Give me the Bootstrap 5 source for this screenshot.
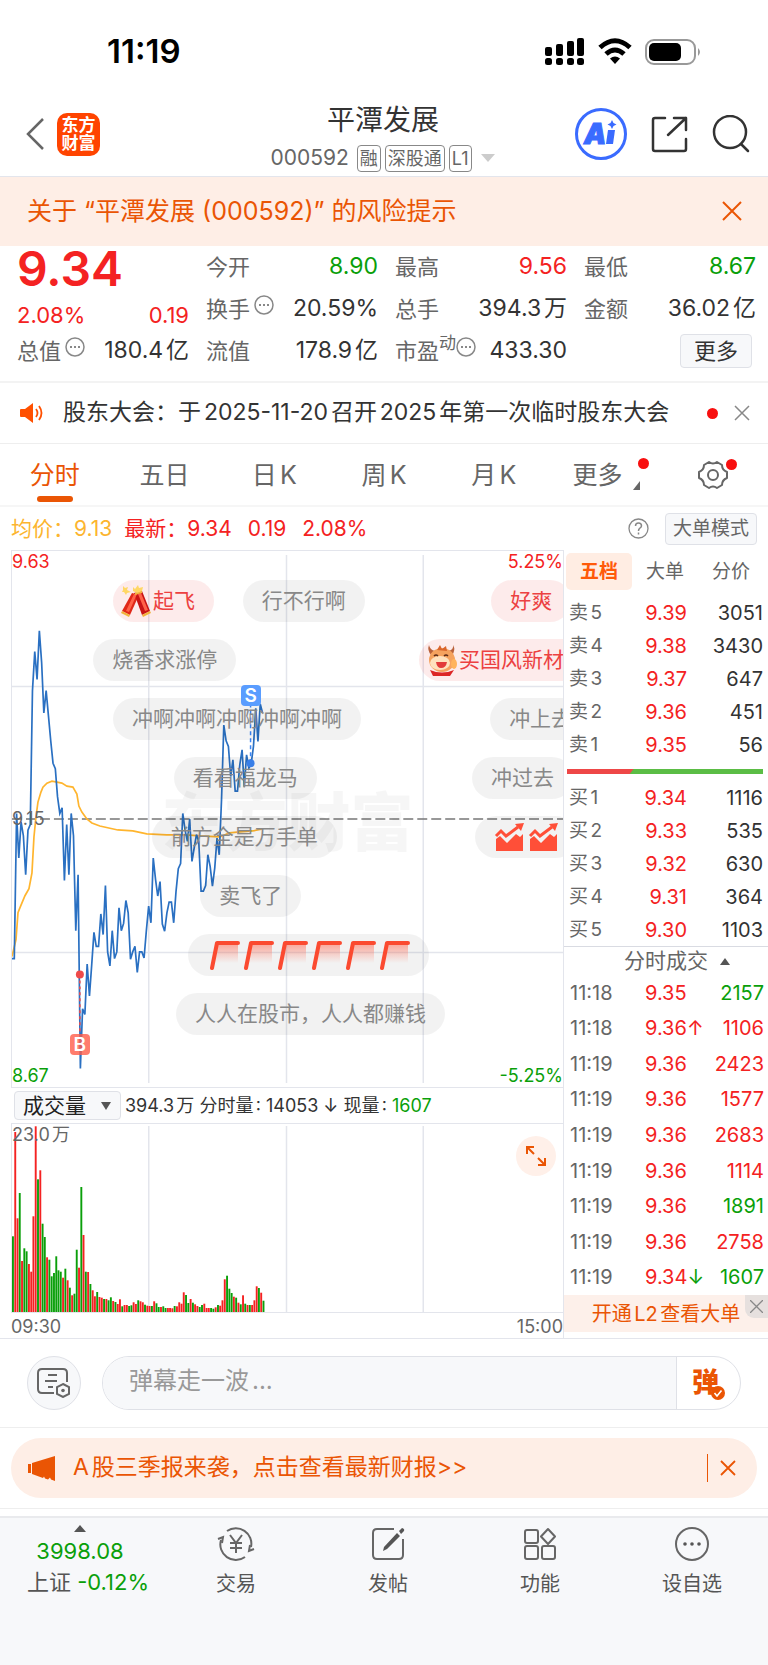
<!DOCTYPE html>
<html lang="zh-CN">
<head>
<meta charset="utf-8">
<meta name="viewport" content="width=device-width, initial-scale=1">
<title>平潭发展 000592</title>
<link href="https://cdn.jsdelivr.net/npm/bootstrap@5.3.0/dist/css/bootstrap.min.css" rel="stylesheet">
<style>
:root{--ink:#333;--grey:#666;--up:#f42222;--down:#0a9f0a;--brand:#ea5504;--tint:#feeee6;--line:#e3e5ec;--soft:#f7f8fa}
body{font-family:Inter,"Noto Sans CJK SC",sans-serif;color:var(--ink);background:#fff;line-height:1.2;text-autospace:normal}
button{border:0;background:none;padding:0;color:inherit;line-height:1}
svg{display:block;flex:none}
a{color:inherit;text-decoration:none}
.up{color:var(--up)}.down{color:var(--down)}.brand{color:var(--brand)}.grey{color:var(--grey)}
.rule{border-bottom:1px solid #eee}
.status{height:100px;padding:3px 66px 0 107px;color:#000}
.clock{font-size:33px;font-weight:600}
.top-bar{height:77px;border-bottom:1px solid var(--line);padding:0 18px 0 26px}
.logo{width:43px;height:43px;border-radius:10px;background:#ff4400;color:#fff;font-size:17px;line-height:18px;font-weight:700;padding-top:3px;margin-left:13px}
.title{font-size:28px;line-height:32px;color:var(--ink)}
.code{font-size:21px;line-height:28px;color:var(--grey)}
.tag{border:1px solid #888;border-radius:4px;font-size:18px;line-height:25px;padding:0 2px}
.side{width:180px;margin-bottom:8px}
.side-end{width:190px}
.risk{height:69px;background:var(--tint);padding:0 26px 2px 27px;font-size:25px}
.quote{display:grid;grid-template-columns:repeat(4,1fr);column-gap:17px;padding:0 12px 9px 17px;font-size:23px;border-bottom:2px solid #f3f3f3}
.quote .grey,.more-btn,.change{font-size:22px}
.quote .sup{font-size:17px}
.cell{height:42px}
.price{font-size:48px;font-weight:600;line-height:46px}
.change{margin-top:8px;height:30px}
.more-btn,.mode-btn,.pick{background:var(--soft);border:1px solid #dfe1e7;border-radius:4px}
.more-btn{width:72px;height:34px;margin-right:4px}
.info{margin:-8px 0 0 4px}
.notice{height:61px;padding:0 18px 0 20px;font-size:23px}
.notice a{margin-left:19px}
.dot{width:11px;height:11px;border-radius:50%;background:#f80f0f}
.tabs{height:63px;font-size:25px;border-bottom:2px solid #f6f6f6}
.tabs a{flex:1;display:flex;justify-content:center}
.tabs .on{color:var(--brand)}
.tabs .on span::after{content:"";position:absolute;left:7px;right:7px;bottom:-12px;height:6px;border-radius:3px;background:var(--brand)}
.tabs .dot{position:absolute;top:-2px;right:-9px}
.tabs .gear .dot{top:-1px}
.tabs .more{padding-right:18px;left:3px}
.summary{height:43px;padding:0 11px;font-size:21px}
.avg{color:#fcb52f}
.mode-btn{font-size:19px;height:32px;padding:0 7px}
.board{padding-left:11px;border-bottom:1px solid var(--line)}
.plot{position:relative;border:1px solid var(--line);border-right:0;overflow:hidden;font-size:18px}
.plot svg.area{width:100%}
.corner{position:absolute;line-height:22px}
.corner.mid{top:257px}
.watermark{position:absolute;top:45%;left:0;right:0;font-size:63px;line-height:60px;font-weight:900;color:rgba(0,0,0,.035);text-align:center}
.lanes{position:absolute;inset:29px 0 0 -1px;display:flex;flex-direction:column;gap:17px}
.lane{position:relative;height:42px}
.say{position:absolute;top:0;height:42px;border-radius:21px;padding:0 19px;background:rgba(0,0,0,.05);color:#888;font-size:21px;line-height:42px;white-space:nowrap;display:flex;align-items:center;gap:4px}
.say.hot{background:rgba(240,60,60,.1);color:#ec4141}
.say.pic{padding-left:8px;gap:2px}
.mark-s,.mark-b{position:absolute;width:20px;height:21px;border-radius:4px;color:#fff;font-size:19px;font-weight:600;line-height:21px;text-align:center;transform:translateX(-50%)}
.mark-s{background:#5a9dff}.mark-b{background:rgba(255,92,72,.8)}
.volhead{height:35px;padding-left:3px;font-size:18px}
.pick{-webkit-appearance:none;appearance:none;height:29px;width:107px;font-size:21px;line-height:27px;padding:0 8px;color:#222}
.picker::after{content:"";position:absolute;right:10px;top:11px;border:5px solid transparent;border-top:8px solid #555;border-bottom:0}
.expand{position:absolute;right:7px;top:12px;width:40px;height:40px;border-radius:50%;background:#fff0e9}
.axis{font-size:18px;height:25px;line-height:28px}
.book{width:205px;flex:none;border-left:1px solid var(--line);font-size:20px}
.book-tabs{padding:3px 4px 6px 2px}
.book-tabs .nav-link{border-radius:5px;width:66px;height:37px;padding:0;font-size:19px;color:var(--grey)}
.book-tabs .active{background:#ffede3;color:#ff5a0a;font-weight:700}
.book table{width:100%;margin:0;line-height:1}
.book th,.book td{padding:0;font-weight:400;vertical-align:middle}
.lvl th{width:80px;padding-left:5px;color:var(--grey);font-size:19px}
.lvl td:nth-child(2){width:43px;text-align:right;color:var(--up)}
.lvl td:nth-child(3){padding-right:5px;text-align:right}
.lvl tr{height:33px}
.balance{height:5px;margin:8px 5px 7px 3px;background:#5bbd45}
.balance div{height:5px;background:#ee4747;clip-path:polygon(0 0,100% 0,calc(100% - 4px) 100%,0 100%)}
.tick-head{border-top:1px solid #d9dbe2;height:29px;font-size:21px;padding-left:22px}
.ticks{height:320px}
.ticks th{width:81px;padding-left:6px;color:var(--grey)}
.ticks td:nth-child(2){color:var(--up)}
.ticks td:nth-child(3){text-align:right;padding-right:4px}
.l2{height:37px;background:#fdf0ea;font-size:20px;position:relative}
.l2 button{position:absolute;right:0;top:0;width:23px;height:23px;background:#e6e0de;border-bottom-left-radius:9px}
.talk{height:89px;padding:0 27px;gap:21px}
.circle-btn{width:54px;height:54px;border-radius:50%;background:var(--soft);border:1px solid #dfe1e7}
.talk-box{height:54px;border:1px solid #dfe1e7;border-radius:27px;overflow:hidden;background:#fff}
.talk-box input{border:0;background:var(--soft);font-size:24px;padding:0 26px 3px;color:var(--ink);outline:0;min-width:0}
.talk-box input::placeholder{color:#999}
.talk-box button{width:64px;border-left:1px solid #dfe1e7;padding-right:6px}
.talk-box button svg{position:absolute;left:34px;top:29px}
.danmu{font-size:27px;font-weight:900;line-height:36px;color:var(--brand)}
.promo{margin:10px 11px;height:60px;border-radius:30px;background:var(--tint);font-size:23px;padding:0 21px 0 17px}
.promo a{margin-left:17px}
.promo i{width:1px;height:28px;background:var(--brand)}
.dock{background:var(--soft);border-top:2px solid #e9eaed;margin-top:7px;height:149px;color:#555}
.index{width:160px;flex:none;font-size:22px;padding-top:7px;white-space:nowrap}
.index span{line-height:31px}
.dock-item{flex:1;font-size:20px;padding-top:9px;line-height:24px}
.dock-item svg{margin-bottom:11px}
</style>
</head>
<body>
<header>
  <div class="status d-flex justify-content-between align-items-center">
    <span class="clock">11:19</span>
    <div class="d-flex align-items-center">
      <svg width="40" height="28" viewBox="0 0 40 28"><g fill="#000"><rect y="9" width="7" height="9" rx="2"/><rect x="11" y="6" width="7" height="12" rx="2"/><rect x="22" y="3" width="7" height="15" rx="2"/><rect x="32" width="7" height="18" rx="2"/><rect y="20" width="7" height="7" rx="2.500"/><rect x="11" y="20" width="7" height="7" rx="2.500"/><rect x="22" y="20" width="7" height="7" rx="2.500"/><rect x="32" y="20" width="7" height="7" rx="2.500"/></g></svg>
      <svg class="mx-2" width="44" height="28" viewBox="-4 0 42 28"><g fill="none" stroke="#000" stroke-width="5"><path d="M2 9.500Q17-4 32 9.500"/><path d="M8 16Q17 8 26 16"/></g><path d="M12 20.500q5-4 10 0l-5 5.500z"/></svg>
      <svg width="57" height="28" viewBox="0 0 57 28"><rect x="1" y="2" width="49" height="24" rx="8" fill="none" stroke="#999" stroke-width="2"/><rect x="4" y="5" width="32" height="18" rx="5"/><path d="M53 10q4 4 0 8z" fill="#999"/></svg>
    </div>
  </div>
  <div class="top-bar d-flex align-items-center justify-content-between">
    <div class="side d-flex align-items-center">
      <button aria-label="返回"><svg width="18" height="32" viewBox="0 0 18 32"><path d="M17 1L2 16l15 15" fill="none" stroke="#666" stroke-width="2.500"/></svg></button>
      <div class="logo text-center">东方<br>财富</div>
    </div>
    <div class="text-center">
      <h1 class="title mb-2 fw-normal">平潭发展</h1>
      <div class="code d-flex align-items-center">
        <span class="me-2">000592</span><span class="tag me-1">融</span><span class="tag me-1">深股通</span><span class="tag">L1</span>
        <svg class="ms-2" width="16" height="8" viewBox="0 0 16 8"><path d="M1 0h14L8 8z" fill="#ccc"/></svg>
      </div>
    </div>
    <div class="side side-end d-flex align-items-center justify-content-end">
      <button aria-label="AI"><svg width="52" height="52" viewBox="0 0 52 52"><circle cx="26" cy="26" r="24.500" fill="none" stroke="#3a6bff" stroke-width="3"/><text x="9" y="36" font-family="Inter" font-size="28" font-weight="900" font-style="italic" fill="#3a6bff" stroke="#3a6bff">A</text><path d="M33 22h7l-2 14h-7z" fill="#3a6bff"/><path d="M37 12l1.500 3 3 1.500-3 1.500-1.500 3-1.500-3-3-1.500 3-1.500z" fill="#3a6bff"/></svg></button>
      <button class="ms-4" aria-label="分享"><svg width="37" height="37" viewBox="0 0 37 37"><g fill="none" stroke="#333" stroke-width="2.500" stroke-linecap="round" stroke-linejoin="round"><path d="M14 2H4Q2 2 2 4v29q0 2 2 2h29q2 0 2-2V23"/><path d="M23 2h12v12M35 2L17 19"/></g></svg></button>
      <button class="ms-4" aria-label="搜索"><svg width="38" height="38" viewBox="0 0 38 38"><g fill="none" stroke="#333" stroke-width="2.500" stroke-linecap="round"><circle cx="18" cy="17" r="16"/><path d="M29 29l7 7"/></g></svg></button>
    </div>
  </div>
</header>

<div class="risk brand d-flex align-items-center justify-content-between">
  <a href="#">关于 “平潭发展 (000592)” 的风险提示</a>
  <button aria-label="关闭"><svg width="20" height="20" viewBox="0 0 20 20"><path d="M1 1l18 18M19 1L1 19" stroke="#ea5504" stroke-width="2"/></svg></button>
</div>

<section class="quote">
  <div>
    <div class="price up">9.34</div>
    <div class="change up d-flex align-items-center justify-content-between"><span>2.08%</span><span>0.19</span></div>
    <div class="cell d-flex align-items-center"><span class="grey">总值</span><svg class="info" width="20" height="20" viewBox="0 0 20 20"><circle cx="10" cy="10" r="9" fill="none" stroke="#888" stroke-width="1.500"/><path d="M5 9h2v2H5zm4 0h2v2H9zm4 0h2v2h-2z" fill="#888"/></svg><span class="ms-auto">180.4亿</span></div>
  </div>
  <div>
    <div class="cell d-flex align-items-center justify-content-between"><span class="grey">今开</span><span class="down">8.90</span></div>
    <div class="cell d-flex align-items-center"><span class="grey">换手</span><svg class="info" width="20" height="20" viewBox="0 0 20 20"><circle cx="10" cy="10" r="9" fill="none" stroke="#888" stroke-width="1.500"/><path d="M5 9h2v2H5zm4 0h2v2H9zm4 0h2v2h-2z" fill="#888"/></svg><span class="ms-auto">20.59%</span></div>
    <div class="cell d-flex align-items-center justify-content-between"><span class="grey">流值</span><span>178.9亿</span></div>
  </div>
  <div>
    <div class="cell d-flex align-items-center justify-content-between"><span class="grey">最高</span><span class="up">9.56</span></div>
    <div class="cell d-flex align-items-center justify-content-between"><span class="grey">总手</span><span>394.3万</span></div>
    <div class="cell d-flex align-items-center"><span class="grey">市盈</span><span class="grey sup lh-1 mb-3">动</span><svg class="info ms-0" width="20" height="20" viewBox="0 0 20 20"><circle cx="10" cy="10" r="9" fill="none" stroke="#888" stroke-width="1.500"/><path d="M5 9h2v2H5zm4 0h2v2H9zm4 0h2v2h-2z" fill="#888"/></svg><span class="ms-auto">433.30</span></div>
  </div>
  <div>
    <div class="cell d-flex align-items-center justify-content-between"><span class="grey">最低</span><span class="down">8.67</span></div>
    <div class="cell d-flex align-items-center justify-content-between"><span class="grey">金额</span><span>36.02亿</span></div>
    <div class="cell d-flex align-items-center justify-content-end"><button class="more-btn">更多</button></div>
  </div>
</section>

<div class="notice rule d-flex align-items-center">
  <svg width="24" height="20" viewBox="0 0 24 20"><path d="M1 6h4l8-6v20l-8-6H1q-1 0-1-1V7q0-1 1-1z" fill="#ff5000"/><path d="M16 6q3 4 0 8M19 3q5 7 0 14" fill="none" stroke="#ff5000" stroke-width="1.800"/></svg>
  <a href="#" class="text-nowrap">股东大会：于2025-11-20召开2025年第一次临时股东大会</a>
  <span class="dot ms-auto"></span>
  <button class="ms-3" aria-label="关闭"><svg width="16" height="16" viewBox="0 0 16 16"><path d="M1 1l14 14M15 1L1 15" stroke="#888" stroke-width="1.500"/></svg></button>
</div>

<nav class="tabs grey d-flex align-items-center">
  <a href="#" class="on"><span class="position-relative">分时</span></a><a href="#">五日</a><a href="#">日K</a><a href="#">周K</a><a href="#">月K</a>
  <a href="#"><span class="more position-relative">更多<span class="dot"></span><svg class="position-absolute bottom-0 end-0" width="7" height="9" viewBox="0 0 7 9"><path d="M7 0v9H0z" fill="#666"/></svg></span></a>
  <a href="#" aria-label="设置"><span class="gear position-relative"><svg width="30" height="30" viewBox="0 0 30 30"><g fill="none" stroke="#666" stroke-width="2" stroke-linejoin="round"><path d="M11 2q4 3 8 0l5 3q0 5 5 7v6q-5 2-5 7l-5 3q-4-3-8 0l-5-3q0-5-5-7v-6q5-2 5-7z"/><circle cx="15" cy="15" r="5"/></g></svg><span class="dot"></span></span></a>
</nav>

<div class="summary d-flex align-items-center">
  <span class="avg">均价：9.13</span><span class="up ms-2 ps-1">最新：9.34</span><span class="up ms-3">0.19</span><span class="up ms-3">2.08%</span>
  <button class="ms-auto me-3" aria-label="帮助"><svg width="21" height="21" viewBox="0 0 21 21"><circle cx="10.500" cy="10.500" r="9.500" fill="none" stroke="#888" stroke-width="1.300"/><path d="M7.500 8q0-3 3-3t3 3q0 1-2 2.500-1 1-1 2.500m0 1.500v2" fill="none" stroke="#888" stroke-width="1.500"/></svg></button>
  <button class="mode-btn grey">大单模式</button>
</div>

<main class="board d-flex">
  <section class="flex-grow-1">
    <div class="plot">
      <div class="watermark">东方财富</div>
      <svg class="area" id="priceChart" height="536" viewBox="0 0 552 538" preserveAspectRatio="none">
        <g stroke="#e3e5ec" stroke-width="1.500"><path d="M137 4v530M275 4v530M412 4v530M0 136h552M0 403h552"/></g>
        <path d="M0 269h552" stroke="#777" stroke-width="1.500" stroke-dasharray="10 4"/>
        <polyline fill="none" stroke="#ffb52e" stroke-width="1.700" points="0,407 4,390 6,363 8,358 13,346 17,339 20,323 22,287 24,267 26,252 29,242 31,237 35,233 40,231 45,232 50,233 55,236 61,237 65,244 67,256 70,262 75,269 80,273 88,276 106,280 121,281 135,284 155,285 175,285 188,286 208,287 218,283 228,282 241,281 251,279"/>
        <polyline id="priceLine" fill="none" stroke="#2a70c2" stroke-width="1.700"/>
        <circle cx="68" cy="425" r="4" fill="#ee4a4a"/><path d="M68 425v60" stroke="#ee4a4a" stroke-width="1.500" stroke-dasharray="3 3"/>
        <circle cx="239" cy="213" r="4" fill="#3d86f5"/><path d="M239 213v-65" stroke="#3d86f5" stroke-width="1.500" stroke-dasharray="4 3"/>
      </svg>
      <span class="corner up top-0 start-0">9.63</span><span class="corner up top-0 end-0">5.25%</span>
      <span class="corner mid grey start-0">9.15</span>
      <span class="corner down bottom-0 start-0">8.67</span><span class="corner down bottom-0 end-0">-5.25%</span>
      <div class="lanes">
        <div class="lane"><span class="say hot pic" style="left:18.500%"><svg width="30" height="32" viewBox="0 0 30 32"><path d="M11 8l7 2-9 20-8-4z" fill="#e02818"/><path d="M13 8l8-2 8 20-8 4z" fill="#c81414"/><path d="M13 9l3 0-8 18-3-1zM17 9l3-1 7 17-3 1z" fill="#ff6248"/><path d="M1 26l8 4-1 2-8-4zM21 30l8-4 1 2-8 4zM14 8l7-2v2l-7 2z" fill="#f1b33c"/><path d="M12 2l2 2 3-4 1 3 4-1-1 4-5 2-4-2zM2 1l2 2 3-1-1 3 4 2-4 1-1 2-2-3-2 0 1-2z" fill="#ffd765"/></svg>起飞</span><span class="say" style="left:42%">行不行啊</span><span class="say hot" style="left:87%">好爽</span></div>
        <div class="lane"><span class="say" style="left:14.900%">烧香求涨停</span><span class="say hot pic" style="left:73.900%"><svg width="30" height="32" viewBox="0 0 30 32"><path d="M2 1q1 5 6 6l-4 4Q0 6 2 1zM26 1q1 5-5 6l4 4q4-5 1-10z" fill="#b9613b"/><ellipse cx="15" cy="16" rx="13" ry="12" fill="#f5a25f"/><path d="M10 6l3-5 2 4 4-3 1 5z" fill="#d9652c"/><ellipse cx="13" cy="19" rx="10" ry="7" fill="#ffe0bd"/><path d="M7 12q2-2 4 0M17 12q2-2 4 0" stroke="#5b2a18" stroke-width="1.500" fill="none"/><path d="M9 18h11q-1 6-6 6-4 0-5-6z" fill="#e23a3a"/><path d="M3 26q12 5 24 0l-4 6H6z" fill="#dc2626"/><ellipse cx="27" cy="20" rx="3" ry="5" fill="#ffb45c"/></svg>买国风新材</span></div>
        <div class="lane"><span class="say" style="left:18.500%">冲啊冲啊冲啊冲啊冲啊</span><span class="say" style="left:86.800%">冲上去</span></div>
        <div class="lane"><span class="say" style="left:29.500%">看看福龙马</span><span class="say" style="left:83.500%">冲过去</span></div>
        <div class="lane"><span class="say" style="left:25.500%">前方全是万手单</span><span class="say" style="left:84.100%"><svg width="64" height="30" viewBox="0 0 64 30"><g id="rise"><path d="M2 29V17l4-3 7 7 9-9 4 3 3-3v17z" fill="#ff4f38"/><path d="M2 14l5-5 5 5 12-9" fill="none" stroke="#ff4f38" stroke-width="3"/><path d="M21 2l9-1-3 8z" fill="#ff4f38"/></g><use href="#rise" x="34"/></svg></span></div>
        <div class="lane"><span class="say" style="left:34.300%">卖飞了</span></div>
        <div class="lane"><span class="say" style="left:32%"><svg width="203" height="30" viewBox="0 0 203 30"><defs><linearGradient id="fade" x2="0" y2="1"><stop stop-color="#ff7a66" stop-opacity=".65"/><stop offset="1" stop-color="#ff7a66" stop-opacity="0"/></linearGradient><g id="flag"><path d="M9 3h22v20H5z" fill="url(#fade)"/><path d="M5 28L10 3H31" fill="none" stroke="#fb4a30" stroke-width="4" stroke-linecap="round" stroke-linejoin="round"/></g></defs><use href="#flag"/><use href="#flag" x="34"/><use href="#flag" x="68"/><use href="#flag" x="102"/><use href="#flag" x="136"/><use href="#flag" x="170"/></svg></span></div>
        <div class="lane"><span class="say" style="left:29.900%">人人在股市，人人都赚钱</span></div>
      </div>
      <span class="mark-s" style="left:43.300%;top:134px">S</span>
      <span class="mark-b" style="left:12.300%;top:483px">B</span>
    </div>
    <div class="volhead d-flex align-items-center">
      <label class="picker position-relative"><select class="pick" aria-label="指标"><option>成交量</option></select></label>
      <span class="ms-1">394.3万 分时量: 14053 ↓ 现量: <span class="down">1607</span></span>
    </div>
    <div class="plot">
      <svg class="area" id="volChart" height="188" viewBox="0 0 552 188" preserveAspectRatio="none"><path d="M137 2v186M275 2v186M412 2v186" stroke="#e3e5ec" stroke-width="1.500"/></svg>
      <span class="corner grey start-0 top-0">23.0万</span>
      <button class="expand d-flex align-items-center justify-content-center" aria-label="全屏"><svg width="22" height="22" viewBox="0 0 22 22"><path d="M2 9V2h7M2 2l7 7M20 13v7h-7M20 20l-7-7" fill="none" stroke="#ea5504" stroke-width="2"/></svg></button>
    </div>
    <div class="axis grey d-flex justify-content-between"><span>09:30</span><span>15:00</span></div>
  </section>

  <aside class="book">
    <div class="book-tabs nav d-flex flex-nowrap">
      <button class="nav-link active">五档</button><button class="nav-link">大单</button><button class="nav-link">分价</button>
    </div>
    <table class="lvl"><tbody>
      <tr><th>卖5</th><td>9.39</td><td>3051</td></tr>
      <tr><th>卖4</th><td>9.38</td><td>3430</td></tr>
      <tr><th>卖3</th><td>9.37</td><td>647</td></tr>
      <tr><th>卖2</th><td>9.36</td><td>451</td></tr>
      <tr><th>卖1</th><td>9.35</td><td>56</td></tr>
    </tbody></table>
    <div class="balance"><div style="width:34%"></div></div>
    <table class="lvl"><tbody>
      <tr><th>买1</th><td>9.34</td><td>1116</td></tr>
      <tr><th>买2</th><td>9.33</td><td>535</td></tr>
      <tr><th>买3</th><td>9.32</td><td>630</td></tr>
      <tr><th>买4</th><td>9.31</td><td>364</td></tr>
      <tr><th>买5</th><td>9.30</td><td>1103</td></tr>
    </tbody></table>
    <div class="tick-head grey d-flex align-items-center justify-content-center"><span>分时成交</span><svg class="ms-2 ps-1" width="14" height="7" viewBox="0 0 10 7"><path d="M5 0l5 7H0z" fill="#555"/></svg></div>
    <table class="ticks"><tbody>
      <tr><th>11:18</th><td>9.35</td><td class="down">2157</td></tr>
      <tr><th>11:18</th><td>9.36↑</td><td class="up">1106</td></tr>
      <tr><th>11:19</th><td>9.36</td><td class="up">2423</td></tr>
      <tr><th>11:19</th><td>9.36</td><td class="up">1577</td></tr>
      <tr><th>11:19</th><td>9.36</td><td class="up">2683</td></tr>
      <tr><th>11:19</th><td>9.36</td><td class="up">1114</td></tr>
      <tr><th>11:19</th><td>9.36</td><td class="down">1891</td></tr>
      <tr><th>11:19</th><td>9.36</td><td class="up">2758</td></tr>
      <tr><th>11:19</th><td>9.34<span class="down">↓</span></td><td class="down">1607</td></tr>
    </tbody></table>
    <div class="l2 brand d-flex align-items-center justify-content-center"><a href="#">开通L2查看大单</a><button class="d-flex align-items-center justify-content-center" aria-label="关闭"><svg width="13" height="13" viewBox="0 0 13 13"><path d="M0 0l13 13M13 0L0 13" stroke="#888" stroke-width="1.300"/></svg></button></div>
  </aside>
</main>

<form class="talk rule d-flex align-items-center">
  <button type="button" class="circle-btn d-flex align-items-center justify-content-center flex-shrink-0" aria-label="弹幕设置"><svg width="34" height="30" viewBox="0 0 34 30"><g fill="none" stroke="#666" stroke-width="2"><path d="M17 25H5q-4 0-4-4V5q0-4 4-4h21q4 0 4 4v9M11 7h9M8 13h12M11 19h5"/><path d="M26 16l6 3v7l-6 3-6-3v-7z"/></g><circle cx="26" cy="22.500" r="1.800" fill="#666"/></svg></button>
  <div class="talk-box d-flex flex-grow-1"><input class="flex-grow-1" type="text" placeholder="弹幕走一波..." aria-label="弹幕走一波">
    <button type="button" class="position-relative" aria-label="弹幕开关"><span class="danmu">弹</span><svg width="14" height="14" viewBox="0 0 14 14"><circle cx="7" cy="7" r="7" fill="#ea5504"/><path d="M3.500 7l2.500 3 4.500-5.500" fill="none" stroke="#fff" stroke-width="1.600"/></svg></button></div>
</form>

<div class="promo brand d-flex align-items-center">
  <svg width="28" height="25" viewBox="0 0 28 25"><path d="M0 8h3v9H0zM4 7L27 0v25l-4-1.500-1-2-2 2-3-1-1-2-1 1.500L4 18z" fill="#ea5504"/></svg>
  <a href="#">A股三季报来袭，点击查看最新财报&gt;&gt;</a>
  <i class="ms-auto me-2"></i>
  <button class="ps-1" aria-label="关闭"><svg width="16" height="16" viewBox="0 0 16 16"><path d="M1 1l14 14M15 1L1 15" stroke="#ea5504" stroke-width="1.800"/></svg></button>
</div>
<div class="rule"></div>

<footer class="dock d-flex">
  <a href="#" class="index d-flex flex-column align-items-center"><svg width="12" height="7" viewBox="0 0 12 7"><path d="M6 0l6 7H0z" fill="#555"/></svg><span class="down mt-1">3998.08</span><span class="ps-3">上证 <span class="down">-0.12%</span></span></a>
  <a href="#" class="dock-item d-flex flex-column align-items-center"><svg width="38" height="34" viewBox="0 0 38 34"><g fill="none" stroke="#666" stroke-width="2"><path d="M10 4A15.500 15.500 0 0 1 34 20M28 30A15.500 15.500 0 0 1 4 13"/><path d="M1 12l5-2-1 6M37 22l-5 2 1-6"/><path d="M13 8l6 8 6-8M19 16v10M13 16h12M13 21h12"/></g></svg>交易</a>
  <a href="#" class="dock-item d-flex flex-column align-items-center"><svg width="34" height="34" viewBox="0 0 34 34"><path d="M23 2H6Q2 2 2 6v22q0 4 4 4h22q4 0 4-4V12" fill="none" stroke="#666" stroke-width="2"/><path d="M26 6l3 3-13 13-4 2 1-4zM28 4l3-3q3 1 2 3l-3 3z" fill="#555"/></svg>发帖</a>
  <a href="#" class="dock-item d-flex flex-column align-items-center"><svg width="32" height="34" viewBox="0 0 32 34"><g fill="none" stroke="#666" stroke-width="2"><rect x="1" y="3" width="13" height="13" rx="2"/><rect x="1" y="19" width="13" height="13" rx="2"/><rect x="18" y="19" width="13" height="13" rx="2"/><path d="M24 2l7 7.500-7 7.500-7-7.500z" stroke-linejoin="round"/></g></svg>功能</a>
  <a href="#" class="dock-item d-flex flex-column align-items-center"><svg width="34" height="34" viewBox="0 0 34 34"><circle cx="17" cy="17" r="16" fill="none" stroke="#666" stroke-width="2"/><g fill="#555"><circle cx="10" cy="17" r="1.800"/><circle cx="17" cy="17" r="1.800"/><circle cx="24" cy="17" r="1.800"/></g></svg>设自选</a>
</footer>

<script src="https://cdn.jsdelivr.net/npm/bootstrap@5.3.0/dist/js/bootstrap.bundle.min.js"></script>
<script>
// Minute prices in tenths of a cent, 09:30 to 11:19, spread over the traded part of the axis
const prices = [8900,8900,9160,9080,9145,9120,9050,9130,9140,9380,9450,9400,9487,9430,9340,9380,9335,9290,9250,9240,9190,9160,9170,9040,9140,9050,9160,9120,8950,9050,8703,8810,8800,8890,8833,8890,8947,8922,8922,8980,8943,9031,8912,8887,8950,8900,8912,8991,8950,8963,9004,8982,8899,8912,8922,8875,8912,8912,8901,8950,8994,8964,9080,9042,9012,9038,8962,8949,8982,9001,9001,8964,9020,9061,9070,9160,9130,9110,9150,9074,9098,9122,9110,9021,9021,9031,9086,9065,9030,9062,9116,9086,9184,9318,9290,9280,9226,9256,9200,9200,9247,9274,9208,9265,9241,9249,9280,9348,9289,9356,9340];
const step = 251 / (prices.length - 1);
document.getElementById('priceLine').setAttribute('points',
  prices.map((p, i) => (i * step).toFixed(1) + ',' + ((9630 - p) / 960 * 538).toFixed(1)).join(' '));

// Minute volumes; r = up minute, g = down minute
const volumes = 'g227 r540 r281 g357 r153 g191 g182 r144 r121 r287 r557 g398 r425 g265 g225 r164 g157 g107 g117 g167 g125 g121 r103 g130 r95 g73 r50 g55 g187 r133 g375 r231 g121 r120 g84 r65 r47 g60 r45 r43 g39 r39 g35 g44 r33 g30 r24 r38 g17 r21 r21 g18 g20 r29 r24 g35 r32 r29 g22 r19 r18 g18 r32 g26 g15 r15 g17 g12 r12 r12 r11 g18 r17 r29 r25 r59 g51 g27 r39 g28 r23 r18 g15 g21 r25 r12 r12 g12 g10 r14 g21 r19 r35 r98 g109 g70 g57 r46 g43 r28 g23 r50 g25 r21 g21 r21 r35 r77 g72 r58 g34'.split(' ');
document.getElementById('volChart').insertAdjacentHTML('beforeend', volumes.map((v, i) => {
  const h = v.slice(1) / 3;
  return `<rect x="${(i * step).toFixed(1)}" y="${(188 - h).toFixed(1)}" width="1.900" height="${h.toFixed(1)}" fill="${v[0] === 'r' ? '#f42222' : '#0a9f0a'}"/>`;
}).join(''));
</script>
</body>
</html>
